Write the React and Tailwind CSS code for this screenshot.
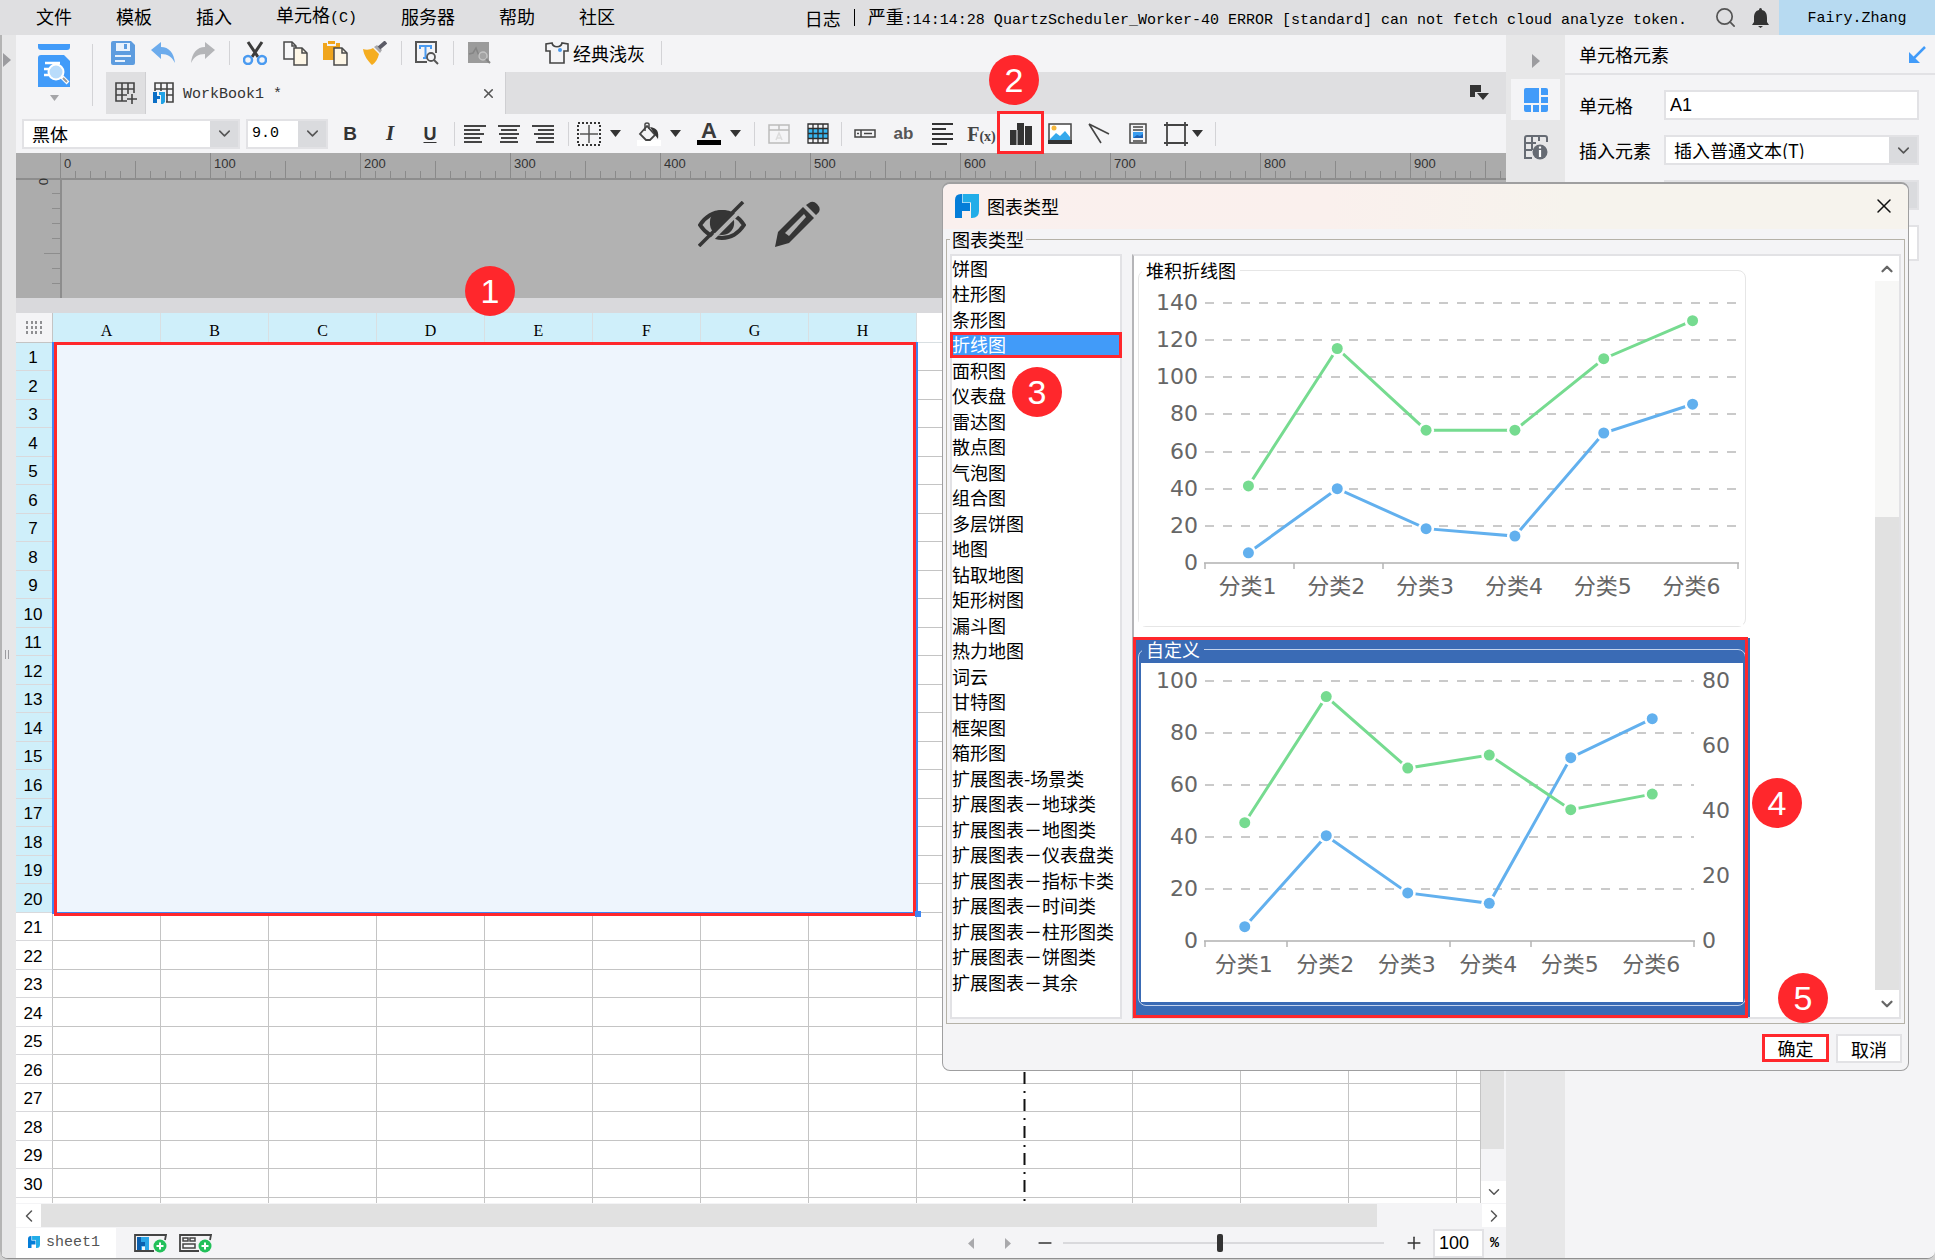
import React from "react";
import { Search, X, ChevronDown, ChevronUp, ChevronLeft, ChevronRight, Plus, Minus } from "lucide-react";

const MENUS = [
  { label: "文件" },
  { label: "模板" },
  { label: "插入" },
  { label: "单元格", key: "(C)" },
  { label: "服务器" },
  { label: "帮助" },
  { label: "社区" },
];

const CHART_TYPES = [
  "饼图", "柱形图", "条形图", "折线图", "面积图", "仪表盘", "雷达图", "散点图", "气泡图", "组合图",
  "多层饼图", "地图", "钻取地图", "矩形树图", "漏斗图", "热力地图", "词云", "甘特图", "框架图", "箱形图",
  "扩展图表-场景类", "扩展图表－地球类", "扩展图表－地图类", "扩展图表－仪表盘类", "扩展图表－指标卡类",
  "扩展图表－时间类", "扩展图表－柱形图类", "扩展图表－饼图类", "扩展图表－其余",
];

const COLUMNS = ["A", "B", "C", "D", "E", "F", "G", "H", "", "", "", "", "", ""];
const ROWS = Array.from({ length: 31 }, (_, i) => i + 1);
const CATEGORIES = ["分类1", "分类2", "分类3", "分类4", "分类5", "分类6"];
const BLUE = "#62b0ee";
const GREEN = "#76db90";

/* ---------- shared pieces ---------- */

function Badge({ n, className }) {
  return (
    <span
      className={
        "absolute z-30 flex size-[50px] items-center justify-center rounded-full bg-[#ff272c] font-['Liberation_Sans',sans-serif] text-[34px] leading-none font-normal text-white " +
        className
      }
    >
      {n}
    </span>
  );
}

function Slot({ label, className = "w-10", children }) {
  return (
    <button type="button" aria-label={label} className={"flex h-full shrink-0 items-center justify-center " + className}>
      {children}
    </button>
  );
}

function Sep({ className = "w-3" }) {
  return (
    <span className={"flex h-6 shrink-0 justify-center " + className}>
      <span className="h-full w-px bg-[#d3d3d6]" />
    </span>
  );
}

function Caret() {
  return (
    <svg width="11" height="7" viewBox="0 0 11 7">
      <path d="M0 0h11L5.500 7z" fill="#333" />
    </svg>
  );
}

function Logo({ size }) {
  return (
    <svg width={size} height={size} viewBox="0 0 24 24" className="shrink-0">
      <path d="M0 6Q0 0 6 0h1v9h8v8H7v7H0z" fill="#047dd8" />
      <path d="M8 0h16v17q0 7-7 7h-1V8H8z" fill="#22ade8" />
      <path d="M7.500 0v8.500H16" fill="none" stroke="#9ed7f4" strokeWidth="1" />
    </svg>
  );
}

function Dropdown({ id, label, value, className = "", textClass }) {
  return (
    <span className={"relative flex h-[30px] border-2 border-[#e2e2e5] bg-white " + className}>
      <select
        id={id}
        aria-label={label}
        className={"h-full w-full appearance-none bg-transparent pl-2 text-black outline-none " + textClass}
        defaultValue={value}
      >
        <option>{value}</option>
      </select>
      <span className="pointer-events-none absolute inset-y-0 right-0 flex w-7 items-center justify-center bg-[#dadbde]">
        <ChevronDown size={19} color="#555" strokeWidth={2} />
      </span>
    </span>
  );
}

/* ---------- top toolbar icons ---------- */

const SaveIcon = () => (
  <svg width="24" height="24" viewBox="0 0 24 24">
    <path d="M2 0h18l4 4v18a2 2 0 0 1-2 2H2a2 2 0 0 1-2-2V2a2 2 0 0 1 2-2z" fill="#5d9cdf" />
    <path d="M5 2h14v8H5z" fill="#e9f2fc" />
    <path d="M13 3h3v5h-3z" fill="#5d9cdf" />
    <path d="M4 15h16M4 20h10" stroke="#e9f2fc" strokeWidth="2" />
  </svg>
);
const UndoIcon = () => (
  <svg width="24" height="24" viewBox="0 0 24 24">
    <path d="M0 9 10 1v5c8 0 13 6 14 16-3-6-7-9-14-9v5z" fill="#6cabec" />
  </svg>
);
const RedoIcon = () => (
  <svg width="24" height="24" viewBox="0 0 24 24">
    <path d="M24 9 14 1v5C6 6 1 12 0 22c3-6 7-9 14-9v5z" fill="#b4b5b8" />
  </svg>
);
const CutIcon = () => (
  <svg width="24" height="24" viewBox="0 0 24 24" fill="none">
    <path d="m5 1 10 15M19 1 9 16" stroke="#3c3c3c" strokeWidth="3" />
    <circle cx="5" cy="19" r="4" stroke="#4a9af0" strokeWidth="2.500" />
    <circle cx="19" cy="19" r="4" stroke="#4a9af0" strokeWidth="2.500" />
  </svg>
);
const CopyIcon = () => (
  <svg width="25" height="25" viewBox="0 0 25 25" stroke="#4a4a4a" strokeWidth="1.500">
    <path d="M1 1h8l4 4v13H1z" fill="#f7f7f8" />
    <path d="M9 1v4h4" fill="none" />
    <path d="M11 7h8l5 5v12H11z" fill="#fdf6e6" />
    <path d="M19 7v5h5" fill="none" />
  </svg>
);
const PasteIcon = () => (
  <svg width="25" height="25" viewBox="0 0 25 25">
    <path d="M0 2h4v3h9V2h4v17H0z" fill="#f0a51c" />
    <path d="M5 0h7v3H5z" fill="#f0a51c" />
    <path d="M11 7h8l5 5v12H11z" fill="#fdf6e6" stroke="#4a4a4a" strokeWidth="1.500" />
    <path d="M19 7v5h5" fill="none" stroke="#4a4a4a" strokeWidth="1.500" />
  </svg>
);
const BrushIcon = () => (
  <svg width="24" height="24" viewBox="0 0 24 24">
    <path d="M0 8c3 1 7 1 10-1l6 6c-1 5-4 9-7 11C5 20 1 15 0 8z" fill="#f5ad20" />
    <path d="m11 6 6 6 2-3-5-5z" fill="#a8a8ab" />
    <path d="m16 7 7-6" stroke="#5b5b66" strokeWidth="4" />
  </svg>
);
const FindIcon = () => (
  <svg width="24" height="24" viewBox="0 0 24 24" fill="none">
    <path d="M12 21H1V1h20v11" stroke="#555" strokeWidth="2" />
    <path d="M5 8V5h11v3M10.500 5v12M8 17h5" stroke="#4a9af0" strokeWidth="2" />
    <circle cx="16" cy="16" r="4" fill="#f4f4f6" stroke="#555" strokeWidth="1.800" />
    <path d="m19 19 4 4" stroke="#555" strokeWidth="2" />
  </svg>
);
const GrayFindIcon = () => (
  <svg width="24" height="24" viewBox="0 0 24 24" fill="none">
    <path d="M1 1h21v21H1z" fill="#9b9b9b" />
    <path d="m2 13 4-1 3-5 3 8 3-4" stroke="#858585" strokeWidth="1.500" />
    <circle cx="16" cy="15" r="4" fill="#a4a4a4" stroke="#c4c4c4" strokeWidth="1.500" />
    <path d="m19 18 4 4" stroke="#858585" strokeWidth="2" />
  </svg>
);
const ShirtIcon = () => (
  <svg width="24" height="24" viewBox="0 0 24 24" fill="none">
    <path d="M7 2 1 3v7h4v12h14V10h4V3l-6-1c-1 5-9 5-10 0z" stroke="#444" strokeWidth="1.600" />
    <circle cx="15" cy="9" r="2" fill="#4a9af0" />
  </svg>
);
const PreviewIcon = () => (
  <svg width="32" height="43" viewBox="0 0 32 43">
    <path d="M0 0h32v3q0 3-3 3H3Q0 6 0 3z" fill="#419bf9" />
    <path d="M3 11h23l6 6v26H0V14q0-3 3-3z" fill="#419bf9" />
    <path d="M7 19h15M6 25h6M6 31h5" stroke="#fff" strokeWidth="2.500" />
    <circle cx="18" cy="28" r="7.500" fill="#b9dcfb" stroke="#fff" strokeWidth="2" />
    <path d="m24 33 6 6" stroke="#fff" strokeWidth="4" />
    <path d="m25 34 4 4" stroke="#9a9a9a" strokeWidth="2" />
  </svg>
);

/* ---------- format toolbar icons ---------- */

function AlignIcon({ kind }) {
  const starts = { left: [0, 0, 0, 0, 0], center: [0, 3, 1, 3, 2], right: [0, 6, 2, 6, 4] }[kind];
  const widths = [22, 16, 20, 16, 18];
  return (
    <svg width="22" height="18" viewBox="0 0 22 18">
      {widths.map((w, i) => (
        <rect key={i} x={starts[i]} y={i * 4} width={w} height="2" fill="#444" />
      ))}
    </svg>
  );
}
const BorderIcon = () => (
  <svg width="24" height="24" viewBox="0 0 24 24" fill="none">
    <path d="M1 1h22v22H1z" stroke="#333" strokeWidth="2" strokeDasharray="2 2" />
    <path d="M12 3v18M3 12h18" stroke="#555" strokeWidth="1.500" />
  </svg>
);
const BucketIcon = () => (
  <svg width="24" height="24" viewBox="0 0 24 24" fill="none">
    <rect x="0" y="18" width="24" height="6" fill="#fff" />
    <path d="m10 4-7 8 6 6h4l5-5z" stroke="#444" strokeWidth="1.800" />
    <path d="M8 9V2q0-1 2-1t2 1v5" stroke="#444" strokeWidth="1.500" />
    <path d="M13 5c7 1 9 4 8 12l-3-4z" fill="#333" />
  </svg>
);
const FontColorIcon = () => (
  <span className="flex flex-col items-center">
    <span className="font-['Liberation_Sans',sans-serif] text-[22px] leading-[18px] font-bold text-[#3a3a3a]">A</span>
    <span className="h-[5px] w-6 bg-black" />
  </span>
);
const GrayTableIcon = () => (
  <svg width="22" height="20" viewBox="0 0 22 20" fill="none" stroke="#bcbcbc" strokeWidth="1.500">
    <path d="M1 1h20v18H1zM1 6h20M11 1v5" />
    <path d="M8 16l3-7 3 7M9 14h4" stroke="#dcdcdc" />
  </svg>
);
const TableIcon = () => (
  <svg width="22" height="21" viewBox="0 0 22 21" fill="none">
    <path d="M1 6h20v9H1z" fill="#36b7f2" />
    <path d="M1 1h20v19H1zM1 5.500h20M1 10.500h20M1 15.500h20M6 1v19M11 1v19M16 1v19" stroke="#2e2e2e" strokeWidth="1.300" />
  </svg>
);
const FieldIcon = () => (
  <svg width="22" height="9" viewBox="0 0 22 9" fill="none" stroke="#444" strokeWidth="1.500">
    <path d="M1 1h20v7H1zM7 1v7M3 4.500h2M10 4.500h8" />
  </svg>
);
const ParagraphIcon = () => (
  <svg width="22" height="22" viewBox="0 0 22 22" stroke="#333" strokeWidth="2">
    <path d="M0 1h21M0 6h14M0 11h21M0 16h21M0 21h15" />
  </svg>
);
const BarsIcon = () => (
  <svg width="22" height="22" viewBox="0 0 22 22" fill="#333">
    <path d="M0 7h7v15H0zM7 0h7v22H7zM15 3h7v19h-7z" />
    <path d="M7 7v15M14.500 3v19" stroke="#f4f4f6" strokeWidth="1" />
  </svg>
);
const PictureIcon = () => (
  <svg width="24" height="21" viewBox="0 0 24 21" fill="none">
    <path d="M1 1h22v18H1z" fill="#fff" stroke="#444" strokeWidth="1.500" />
    <circle cx="6" cy="5" r="2.500" fill="#f5b73c" />
    <path d="m2 16 6-6 4 3 5-5 5 6v3H2z" fill="#36a9ec" />
    <path d="M0 17h24v4H0z" fill="#333" />
  </svg>
);
const SlashIcon = () => (
  <svg width="22" height="21" viewBox="0 0 22 21" stroke="#444" strokeWidth="1.600">
    <path d="m1 1 20 10M1 1l12 19" />
  </svg>
);
const DocIcon = () => (
  <svg width="18" height="21" viewBox="0 0 18 21" fill="none">
    <path d="M1 1h16v19H1z" stroke="#444" strokeWidth="1.500" />
    <path d="M4 4h10M4 7h10M4 18h10" stroke="#444" strokeWidth="1.500" />
    <path d="M4 9h10v6H4z" fill="#3a9df0" />
    <path d="m4 15 4-3 3 1 3-2v4z" fill="#1c61b5" />
  </svg>
);
const FrameIcon = () => (
  <svg width="24" height="24" viewBox="0 0 24 24" stroke="#444" strokeWidth="1.800">
    <path d="M0 3h24M0 21h24M3 0v24M21 0v24" />
  </svg>
);

/* ---------- line chart preview ---------- */

function LineChart({ width, height, left, right, top, bottom, max, ticks, series, secondary, label }) {
  const step = (right - left) / CATEGORIES.length;
  const px = (i) => left - 1 + step * (i + 0.5);
  const py = (v) => bottom - (v / max) * (bottom - top);
  const marks = Array.from({ length: max / 20 + 1 }, (_, i) => i * 20);
  return (
    <svg
      width={width}
      height={height}
      viewBox={`0 0 ${width} ${height}`}
      role="img"
      aria-label={label}
      className="block bg-white font-['DejaVu_Sans','Noto_Sans_CJK_SC',sans-serif] text-[22px]"
    >
      {marks.map((m) => (
        <g key={m}>
          <text x={left - 7} y={py(m) + 7} textAnchor="end" fill="#666">
            {m}
          </text>
          {m > 0 && (
            <path d={`M${left} ${Math.round(py(m))}H${right}`} stroke="#cacaca" strokeWidth="2" strokeDasharray="9 9" />
          )}
        </g>
      ))}
      {secondary &&
        secondary.map((m, i) => (
          <text key={m} x={right + 8} y={bottom + 7 - (i * (bottom - top)) / (secondary.length - 1)} fill="#666">
            {m}
          </text>
        ))}
      <path d={`M${left - 1} ${bottom}H${right + 1}`} stroke="#c4c4c4" strokeWidth="2" />
      {ticks.map((t) => (
        <path key={t} d={`M${Math.round(left + step * t)} ${bottom}v6`} stroke="#b4b4b4" strokeWidth="1.500" />
      ))}
      {CATEGORIES.map((c, i) => (
        <text key={c} x={px(i) - 1} y={bottom + 31} textAnchor="middle" fill="#666">
          {c}
        </text>
      ))}
      {series.map((s) => (
        <g key={s.color}>
          <polyline points={s.values.map((v, i) => `${px(i)},${py(v)}`).join(" ")} fill="none" stroke={s.color} strokeWidth="3" />
          {s.values.map((v, i) => (
            <g key={i}>
              <circle cx={px(i)} cy={py(v)} r="8" fill="#fff" />
              <circle cx={px(i)} cy={py(v)} r="5.500" fill={s.color} />
            </g>
          ))}
        </g>
      ))}
    </svg>
  );
}

/* ---------- page regions ---------- */

function MenuBar() {
  return (
    <header className="flex h-[35px] shrink-0 items-stretch bg-[#dfdfe1]">
      <nav className="flex items-center gap-[44px] pb-1 pl-9">
        {MENUS.map((m) => (
          <button key={m.label} type="button" className="flex items-baseline">
            {m.label}
            {m.key && <span className="font-['Liberation_Mono',monospace] text-[15px]">{m.key}</span>}
          </button>
        ))}
      </nav>
      <div className="ml-auto flex items-center">
        <span>日志</span>
        <span className="mx-[13px] h-[17px] w-px bg-black" />
        <span className="flex items-baseline">
          严重
          <span className="font-['Liberation_Mono',monospace] text-[15px]">
            :14:14:28 QuartzScheduler_Worker-40 ERROR [standard] can not fetch cloud analyze token.
          </span>
        </span>
        <button type="button" aria-label="搜索" className="ml-[27px]">
          <Search size={23} color="#555" strokeWidth={1.8} />
        </button>
        <button type="button" aria-label="通知" className="mr-[10px] ml-[15px]">
          <svg width="17" height="20" viewBox="0 0 17 20" fill="#333">
            <path d="M8.500 0q1.500 0 1.500 2c4 1 5 4 5 8v4l2 3H0l2-3v-4c0-4 1-7 5-8q0-2 1.500-2zM6 18h5l-2.500 2z" />
          </svg>
        </button>
        <button
          type="button"
          className="h-full w-[156px] bg-[#b7daf1] pt-[2px] font-['Liberation_Mono',monospace] text-[15px]"
        >
          Fairy.Zhang
        </button>
      </div>
    </header>
  );
}

function ToolArea() {
  return (
    <div className="flex h-[79px] shrink-0">
      <div className="flex w-[87px] shrink-0 pt-[9px]">
        <button type="button" aria-label="预览" className="ml-[22px] flex w-8 flex-col items-center">
          <PreviewIcon />
          <svg width="9" height="6" viewBox="0 0 9 6" className="mt-2">
            <path d="M0 0h9L4.500 6z" fill="#a5a5a8" />
          </svg>
        </button>
        <span className="ml-[22px] h-[62px] w-px bg-[#d3d3d6]" />
      </div>
      <div className="flex min-w-0 flex-1 flex-col">
        <div className="flex h-[37px] items-center pb-px">
          <Slot label="保存"><SaveIcon /></Slot>
          <Slot label="撤销"><UndoIcon /></Slot>
          <Slot label="重做"><RedoIcon /></Slot>
          <Sep />
          <Slot label="剪切"><CutIcon /></Slot>
          <Slot label="复制"><CopyIcon /></Slot>
          <Slot label="粘贴"><PasteIcon /></Slot>
          <Slot label="格式刷"><BrushIcon /></Slot>
          <Sep />
          <Slot label="查找"><FindIcon /></Slot>
          <Sep />
          <Slot label="检测"><GrayFindIcon /></Slot>
          <button type="button" className="ml-[46px] flex items-center gap-1">
            <ShirtIcon />
            经典浅灰
          </button>
          <Sep className="ml-2 w-4" />
        </div>
        <div className="ml-[3px] flex h-[42px] bg-[#dfdfe1]">
          <button type="button" aria-label="新建" className="flex w-[40px] items-center justify-center border-r border-[#cfcfd2]">
            <svg width="22" height="22" viewBox="0 0 22 22" fill="none" stroke="#444" strokeWidth="1.600">
              <path d="M12 19H1V1h18v10M1 7h18M1 13h11M7 1v18M13 1v11" />
              <path d="M17 12v10M12 17h10" />
            </svg>
          </button>
          <div className="flex w-[360px] items-center border-r border-[#cfcfd2] bg-[#f4f4f6] pr-[9px] pl-[7px]">
            <svg width="22" height="22" viewBox="0 0 22 22" fill="none">
              <path d="M2 9V1h18v19h-7M2 7h18M13 13h7M8 1v8M14 1v19" stroke="#444" strokeWidth="1.600" />
              <path d="M0 10h4v4h3v3H4v4H0z" fill="#0b6fc6" />
              <path d="M6 10h6v10l-2 2H8v-9H6z" fill="#21a3e6" />
            </svg>
            <span className="ml-2 pt-[2px] font-['Liberation_Mono',monospace] text-[15px] text-[#333]">WorkBook1 *</span>
            <button type="button" aria-label="关闭" className="ml-auto">
              <X size={15} color="#555" strokeWidth={2.500} />
            </button>
          </div>
          <button type="button" aria-label="模板列表" className="mr-[17px] ml-auto flex items-center">
            <svg width="19" height="16" viewBox="0 0 19 16" fill="#333">
              <path d="M0 0h11v7H5v5H0zM7 8h12l-6 7z" />
            </svg>
          </button>
        </div>
      </div>
    </div>
  );
}

function FormatBar() {
  const glyph = "font-['Liberation_Sans',sans-serif] leading-none text-[#333]";
  return (
    <div className="flex h-[39px] shrink-0 items-center pl-[6px]">
      <Dropdown label="字体" value="黑体" className="w-[218px]" textClass="text-lg leading-none" />
      <Dropdown
        label="字号"
        value="9.0"
        className="mr-[2px] ml-[6px] w-[82px]"
        textClass="font-['Liberation_Mono',monospace] text-[15px] !pl-1"
      />
      <Slot label="加粗" className="w-10"><b className={glyph + " text-[19px]"}>B</b></Slot>
      <Slot label="斜体" className="w-10">
        <i className="font-['Liberation_Serif',serif] text-[21px] leading-none font-bold text-[#333]">I</i>
      </Slot>
      <Slot label="下划线" className="w-10"><u className={glyph + " text-[18px] font-bold underline-offset-2"}>U</u></Slot>
      <Sep className="w-2" />
      <Slot label="左对齐" className="w-[34px]"><AlignIcon kind="left" /></Slot>
      <Slot label="居中" className="w-[34px]"><AlignIcon kind="center" /></Slot>
      <Slot label="右对齐" className="w-[34px]"><AlignIcon kind="right" /></Slot>
      <Sep className="w-4" />
      <Slot label="边框" className="w-[26px]"><BorderIcon /></Slot>
      <Slot label="边框选项" className="w-[26px]"><Caret /></Slot>
      <Slot label="填充" className="ml-2 w-[26px]"><BucketIcon /></Slot>
      <Slot label="填充选项" className="w-[26px]"><Caret /></Slot>
      <Slot label="文字颜色" className="ml-2 w-[26px]"><FontColorIcon /></Slot>
      <Slot label="颜色选项" className="w-[26px]"><Caret /></Slot>
      <Sep />
      <Slot label="合并单元格" className="w-[38px]"><GrayTableIcon /></Slot>
      <Slot label="数据列" className="w-[39px]"><TableIcon /></Slot>
      <Sep className="w-2" />
      <Slot label="控件" className="w-[39px]"><FieldIcon /></Slot>
      <Slot label="文本" className="w-[39px]"><b className={glyph + " text-[17px] text-[#555]"}>ab</b></Slot>
      <Slot label="富文本" className="w-[39px]"><ParagraphIcon /></Slot>
      <Slot label="公式" className="w-[39px]">
        <span className="font-['Liberation_Serif',serif] leading-none font-bold text-[#444]">
          <span className="text-[20px]">F</span>
          <span className="text-[14px]">(x)</span>
        </span>
      </Slot>
      <span className="relative flex h-full w-[39px]">
        <Slot label="图表" className="w-full"><BarsIcon /></Slot>
        <span className="pointer-events-none absolute -inset-x-1 -top-[3px] -bottom-px z-10 border-[3px] border-[#ff272c]" />
        <Badge n="2" className="-top-[59px] -left-3" />
      </span>
      <Slot label="图片" className="w-[39px]"><PictureIcon /></Slot>
      <Slot label="斜线" className="w-[39px]"><SlashIcon /></Slot>
      <Slot label="子报表" className="w-[39px]"><DocIcon /></Slot>
      <Slot label="悬浮元素" className="ml-[6px] w-[26px]"><FrameIcon /></Slot>
      <Slot label="悬浮选项" className="w-4"><Caret /></Slot>
      <Sep className="w-5" />
    </div>
  );
}

function Ruler() {
  return (
    <div className="flex h-[27px] shrink-0 overflow-hidden border-b-2 border-[#8d8d8d] bg-[#ababab] pl-[44px]">
      {[0, 100, 200, 300, 400, 500, 600, 700, 800, 900].map((n) => (
        <div key={n} className="flex w-[150px] shrink-0 flex-col border-l border-[#8a8a8a]">
          <span className="h-[18px] pl-[3px] font-['Liberation_Sans',sans-serif] text-[13px] leading-[22px] text-[#333]">{n}</span>
          <span className="flex h-[7px] items-end">
            {Array.from({ length: 10 }, (_, i) => (
              <span
                key={i}
                className={
                  i === 0
                    ? "h-0 w-[14px] shrink-0"
                    : i === 5
                    ? "h-[17px] w-[15px] shrink-0 border-l border-[#8a8a8a]"
                    : "h-[7px] w-[15px] shrink-0 border-l border-[#8a8a8a]"
                }
              />
            ))}
          </span>
        </div>
      ))}
    </div>
  );
}

function PreviewPane() {
  return (
    <div className="flex h-[118px] shrink-0 bg-[#b2b2b2]">
      <div className="flex w-[46px] shrink-0 items-start border-r-2 border-[#8d8d8d] bg-[#acacac]">
        <span className="ml-[21px] w-3 rotate-90 font-['Liberation_Sans',sans-serif] text-[13px] leading-[8px] text-[#333]">0</span>
        <span className="mt-[13px] ml-auto flex flex-col items-end gap-[14px]">
          {[1, 2, 3, 4, 5, 6, 7].map((n) => (
            <span key={n} className={n === 5 ? "-ml-4 h-px w-4 bg-[#8d8d8d]" : "h-px w-2 bg-[#8d8d8d]"} />
          ))}
        </span>
      </div>
      <div className="ml-[636px] flex items-start gap-[28px] pt-[21px]">
        <button type="button" aria-label="隐藏">
          <svg width="48" height="46" viewBox="0 0 48 46" fill="none">
            <path d="M2 24C8 15 15 11 24 11s16 4 22 13c-6 9-13 13-22 13S8 33 2 24z" stroke="#353535" strokeWidth="4" />
            <path d="M24 9c-9 0-13 7-12 15 1 7 6 10 12 10s11-4 12-10c1-8-3-15-12-15z" fill="#353535" />
            <path d="M4 48 49 3" stroke="#b2b2b2" strokeWidth="4" />
            <path d="M1 45 45 1" stroke="#353535" strokeWidth="3.500" />
          </svg>
        </button>
        <button type="button" aria-label="编辑">
          <svg width="46" height="46" viewBox="0 0 46 46" fill="none">
            <path d="M4 31 29 6l11 11-25 25-14 4z" fill="#353535" />
            <path d="m11 32 19-19 2 3-17 19z" fill="#b2b2b2" />
            <path d="m32 4 3-2q4-3 8 1t2 8l-3 3z" fill="#353535" />
          </svg>
        </button>
      </div>
    </div>
  );
}

function Sheet() {
  const line = "border-r border-b border-[#c4c4c4]";
  return (
    <div className="relative flex min-h-0 flex-1">
      <div className="relative min-w-0 flex-1 overflow-hidden bg-white">
        <table className="w-full table-fixed border-separate border-spacing-0">
          <colgroup>
            <col className="w-[37px]" />
            {COLUMNS.slice(0, 13).map((c, i) => (
              <col key={i} className="w-[108px]" />
            ))}
            <col />
          </colgroup>
          <thead>
            <tr className="h-[30px] font-['Liberation_Serif',serif] text-base leading-none">
              <th className={"bg-[#f4f4f6] p-0 " + line}>
                <svg width="17" height="14" viewBox="0 0 17 14" className="mx-auto" fill="#8f8f92">
                  {[0, 5, 10].map((y) => [0, 5, 9, 14].map((x) => <rect key={x + "-" + y} x={x} y={y} width="2" height="3" />))}
                </svg>
              </th>
              {COLUMNS.map((c, i) => (
                <th
                  key={i}
                  scope="col"
                  className={
                    "border-r border-b border-[#d9dfe2] p-0 pt-[6px] font-medium " + (i < 8 ? "bg-[#cfeffa]" : "bg-white")
                  }
                >
                  {c}
                </th>
              ))}
            </tr>
          </thead>
          <tbody>
            {ROWS.map((r) => (
              <tr key={r} className="h-7 even:h-[29px]">
                <th
                  scope="row"
                  className={
                    "border-r border-b border-r-[#c4c4c4] border-b-[#d9d9dc] p-0 pt-[2px] pr-[2px] font-['Liberation_Sans',sans-serif] text-[17px] leading-none font-normal " +
                    (r <= 20 ? "bg-[#cfeffa]" : "bg-white")
                  }
                >
                  {r <= 30 ? r : null}
                </th>
                {COLUMNS.map((c, i) => (
                  <td
                    key={i}
                    className={
                      r <= 20 && i < 8
                        ? "bg-[#eef5fd] p-0"
                        : i === 8
                        ? "border-b border-[#c4c4c4] p-0"
                        : "p-0 " + line
                    }
                  />
                ))}
              </tr>
            ))}
          </tbody>
        </table>
        <svg width="3" height="860" className="absolute top-[30px] left-[1007px]">
          <path d="M1.500 0V860" stroke="#111" strokeWidth="2" strokeDasharray="12 7 2 6" />
        </svg>
        <div className="absolute top-[29px] left-[36px] h-[572px] w-[866px] border-2 border-[#3f86f2]" />
        <div className="absolute top-[29px] left-[38px] h-[574px] w-[862px] border-[3px] border-[#ff272c]" />
        <div className="absolute top-[598px] left-[899px] size-[6px] bg-[#3f86f2]" />
      </div>
      <div className="flex w-[25px] shrink-0 flex-col bg-[#f4f4f6]">
        <div className="mr-[2px] mt-[22px] h-[814px] bg-[#e1e1e1]" />
        <button type="button" aria-label="向下滚动" className="mt-auto flex h-[22px] items-center justify-center bg-white">
          <ChevronDown size={18} color="#555" />
        </button>
      </div>
      <Badge n="1" className="-top-[47px] left-[449px]" />
    </div>
  );
}

function HorizontalScroll() {
  return (
    <div className="flex h-[25px] shrink-0 items-stretch py-px">
      <button type="button" aria-label="向左滚动" className="flex w-[25px] items-center justify-center bg-white">
        <ChevronLeft size={20} color="#555" strokeWidth={1.800} />
      </button>
      <div className="flex flex-1">
        <div className="mr-[105px] flex-1 bg-[#e1e1e1]" />
      </div>
      <button type="button" aria-label="向右滚动" className="flex w-6 items-center justify-center bg-white">
        <ChevronRight size={20} color="#555" strokeWidth={1.800} />
      </button>
    </div>
  );
}

function AddSheetIcon({ report }) {
  return (
    <svg width="34" height="19" viewBox="0 0 34 19" fill="none">
      <path d="M20 17H1V1h31l-1 5" stroke="#444" strokeWidth="1.800" />
      {report ? (
        <>
          <path d="M3 3h12v13H3z" fill="#2ba5e6" />
          <path d="M3 3h4v5h4v4H7v4H3z" fill="#0b5fae" />
          <path d="M8 12.500h3V16H8z" fill="#f4f4f6" />
        </>
      ) : (
        <path d="M4 4h5v3H4zM11 4h5v3h-5zM4 10h12v4H4z" stroke="#444" strokeWidth="1.500" />
      )}
      <circle cx="26" cy="12" r="6.500" fill="#22c05a" />
      <path d="M26 8.500v7M22.500 12h7" stroke="#fff" strokeWidth="2" />
    </svg>
  );
}

function StatusBar() {
  return (
    <footer className="flex h-[30px] shrink-0 items-center">
      <button type="button" className="flex h-full w-[100px] items-center gap-[6px] bg-white pb-[2px] pl-3 font-['Liberation_Mono',monospace] text-[15px] text-[#555]">
        <Logo size={12} />
        sheet1
      </button>
      <button type="button" aria-label="新增报表" className="ml-[18px]"><AddSheetIcon report /></button>
      <button type="button" aria-label="新增聚合报表" className="ml-[11px]"><AddSheetIcon /></button>
      <div className="ml-auto flex h-full items-center">
        <button type="button" aria-label="上一页">
          <svg width="6" height="11" viewBox="0 0 6 11"><path d="M6 0v11L0 5.500z" fill="#a9a9ac" /></svg>
        </button>
        <button type="button" aria-label="下一页" className="ml-[31px]">
          <svg width="6" height="11" viewBox="0 0 6 11"><path d="M0 0v11l6-5.500z" fill="#a9a9ac" /></svg>
        </button>
        <button type="button" aria-label="缩小" className="ml-[24px]"><Minus size={20} color="#333" strokeWidth={2} /></button>
        <input
          type="range"
          aria-label="缩放"
          min="0"
          max="100"
          defaultValue="49"
          className="mx-2 h-5 w-[321px] appearance-none bg-[linear-gradient(#d9d9dc,#d9d9dc)] bg-[length:100%_2px] bg-center bg-no-repeat [&::-webkit-slider-thumb]:h-[18px] [&::-webkit-slider-thumb]:w-[6px] [&::-webkit-slider-thumb]:appearance-none [&::-webkit-slider-thumb]:rounded-[2px] [&::-webkit-slider-thumb]:bg-[#333]"
        />
        <button type="button" aria-label="放大" className="ml-3"><Plus size={20} color="#333" strokeWidth={1.800} /></button>
        <input
          aria-label="缩放比例"
          defaultValue="100"
          className="ml-[9px] h-[29px] w-[51px] border-2 border-[#e2e2e5] bg-white pl-1 font-['Liberation_Sans',sans-serif] text-lg leading-none outline-none"
        />
        <span className="mr-[7px] ml-[6px] font-['Liberation_Mono',monospace] text-[15px] font-bold">%</span>
      </div>
    </footer>
  );
}

function SideTabs() {
  return (
    <div className="flex w-[59px] shrink-0 flex-col items-center bg-[#e7e7e8]">
      <button type="button" aria-label="收起" className="mt-[19px]">
        <svg width="8" height="14" viewBox="0 0 8 14"><path d="M0 0v14l8-7z" fill="#9c9c9f" /></svg>
      </button>
      <button type="button" aria-label="单元格元素" className="mt-[11px] flex h-[41px] w-[49px] items-center justify-center bg-[#f4f4f6]">
        <svg width="24" height="24" viewBox="0 0 24 24" fill="#419bf9">
          <path d="M2 0h13v15H0V2q0-2 2-2zM17 0h5q2 0 2 2v5h-7zM17 9h7v6h-7zM0 17h7v7H2q-2 0-2-2zM9 17h6v7H9zM17 17h7v5q0 2-2 2h-5z" />
        </svg>
      </button>
      <button type="button" aria-label="单元格属性" className="mt-[15px]">
        <svg width="24" height="25" viewBox="0 0 24 25" fill="none">
          <path d="M8 23H1V3q0-2 2-2h18q2 0 2 2v4M1 8h11M1 15h7M8 1v14M15 1v5" stroke="#666b73" strokeWidth="2" />
          <circle cx="16" cy="17" r="7.500" fill="#666b73" />
          <path d="M16 15v7M16 11.500v2" stroke="#fff" strokeWidth="2.200" />
        </svg>
      </button>
    </div>
  );
}

function PropertyPanel() {
  return (
    <aside className="flex w-[370px] shrink-0 flex-col bg-[#f4f4f6]">
      <div className="flex h-[40px] items-center border-b-2 border-[#e2e2e5] pr-[9px] pl-[14px]">
        <h2 className="text-lg leading-none font-normal">单元格元素</h2>
        <button type="button" aria-label="弹出" className="ml-auto">
          <svg width="17" height="17" viewBox="0 0 17 17" fill="none" stroke="#419bf9" strokeWidth="2.500">
            <path d="M16 1 4 13" />
            <path d="M0 6v11h11z" fill="#419bf9" stroke="none" />
          </svg>
        </button>
      </div>
      <div className="grid grid-cols-[85px_1fr] items-center gap-y-[15px] pt-[15px] pr-4 pl-[14px]">
        <label htmlFor="cell">单元格</label>
        <input
          id="cell"
          defaultValue="A1"
          className="h-[30px] w-full border-2 border-[#e2e2e5] bg-white pl-1 font-['Liberation_Sans',sans-serif] text-lg leading-none outline-none"
        />
        <label htmlFor="element">插入元素</label>
        <Dropdown id="element" label="插入元素" value="插入普通文本(T)" textClass="text-lg leading-none" />
        <span className="col-start-2">
          <Dropdown label="格式" value="常规" textClass="text-lg leading-none" />
        </span>
        <input aria-label="内容" className="col-start-2 h-[36px] w-full border-2 border-[#e2e2e5] bg-white outline-none" />
      </div>
    </aside>
  );
}

function ChartDialog() {
  return (
    <section
      role="dialog"
      aria-label="图表类型"
      className="absolute top-[182px] right-[26px] z-20 flex w-[967px] flex-col rounded-lg border border-t-2 border-[#9f9fa0] bg-[#f4f4f6]"
    >
      <div className="flex h-[45px] items-center rounded-t-lg bg-[linear-gradient(90deg,#faf0ee,#faf0ed_40%,#f6f3ed_65%)] pr-3 pb-[2px] pl-3">
        <Logo size={24} />
        <h1 className="ml-2 text-lg leading-none font-normal">图表类型</h1>
        <button type="button" aria-label="关闭" className="ml-auto">
          <X size={24} color="#111" strokeWidth={1.500} />
        </button>
      </div>
      <fieldset className="mx-[3px] mt-px min-w-0 border border-[#b5b2a8] pr-[3px] pb-1 pl-[3px]">
        <legend className="px-[2px] text-lg leading-[18px]">图表类型</legend>
        <div className="flex pt-[6px]">
          <div className="relative w-[172px] shrink-0 border-2 border-[#e2e2e5] bg-white">
            <ul role="listbox" aria-label="图表类型列表">
              {CHART_TYPES.map((t) => (
                <li
                  key={t}
                  role="option"
                  aria-selected={t === "折线图"}
                  className={
                    "h-[25px] leading-6 whitespace-nowrap even:h-[26px] " +
                    (t === "折线图" ? "relative bg-[#419bf9] text-white" : "")
                  }
                >
                  {t}
                  {t === "折线图" && <span className="absolute -inset-x-[2px] inset-y-0 border-[3px] border-[#ff272c]" />}
                </li>
              ))}
            </ul>
            <Badge n="3" className="top-[111px] left-[60px]" />
          </div>
          <div className="ml-[10px] flex min-w-0 flex-1 border-2 border-[#e2e2e5] border-l-[#b5b5b8] bg-white">
            <div className="flex-1 pt-[5px]">
              <fieldset className="ml-1 w-[608px] rounded-lg border border-[#e6e6e6]">
                <legend className="ml-[3px] px-1 text-lg leading-[18px]">堆积折线图</legend>
                <LineChart
                  label="堆积折线图"
                  width={604}
                  height={347}
                  left={66}
                  right={599}
                  top={24}
                  bottom={284}
                  max={140}
                  ticks={[0, 1, 2, 6]}
                  series={[
                    { color: BLUE, values: [5.5, 40, 18.5, 14.5, 70, 85.5] },
                    { color: GREEN, values: [41.5, 115.5, 71.5, 71.5, 110, 130.5] },
                  ]}
                />
              </fieldset>
              <div className="relative mt-[11px] w-[616px] bg-[#3a6bb5] pt-[2px] pb-[11px]">
                <fieldset className="ml-1 w-[608px] rounded-lg border border-[#c3d3ec] px-[2px] pb-[3px]">
                  <legend className="ml-px px-1 text-lg leading-[18px] text-white">自定义</legend>
                  <div className="pt-[5px]">
                    <LineChart
                      label="自定义"
                      width={602}
                      height={339}
                      left={64}
                      right={553}
                      top={18}
                      bottom={278}
                      max={100}
                      ticks={[0, 1, 3, 4, 6]}
                      secondary={[0, 20, 40, 60, 80]}
                      series={[
                        { color: BLUE, values: [5.5, 40.5, 18.5, 14.5, 70.5, 85.5] },
                        { color: GREEN, values: [45.5, 94, 66.5, 71.5, 50.5, 56.5] },
                      ]}
                    />
                  </div>
                </fieldset>
                <span className="pointer-events-none absolute -inset-y-px right-[2px] -left-px border-[3px] border-[#ff272c]" />
                <Badge n="4" className="top-[140px] left-[618px]" />
              </div>
            </div>
            <div className="flex w-6 flex-col bg-[#e1e1e1]">
              <button type="button" aria-label="向上滚动" className="flex h-[25px] items-center justify-center bg-white">
                <ChevronUp size={18} color="#666" strokeWidth={3} />
              </button>
              <div className="h-[236px] bg-[#f7f7f6]" />
              <button type="button" aria-label="向下滚动" className="mt-auto flex h-[27px] items-center justify-center bg-white">
                <ChevronDown size={18} color="#666" strokeWidth={3} />
              </button>
            </div>
          </div>
        </div>
      </fieldset>
      <div className="relative flex justify-end gap-[7px] pt-[10px] pr-[6px] pb-[7px]">
        <button type="button" className="h-[28px] w-[67px] border-[3px] border-[#ff272c] bg-white leading-none">确定</button>
        <button type="button" className="h-[29px] w-[66px] border-2 border-[#e2e2e5] bg-white leading-none">取消</button>
        <Badge n="5" className="-top-[51px] right-[80px]" />
      </div>
    </section>
  );
}

export default function App() {
  return (
    <div className="h-screen overflow-hidden bg-[#cfcfcf] font-['Noto_Sans_CJK_SC',sans-serif] text-lg leading-none text-black">
      <div className="relative flex h-[calc(100vh-1px)] flex-col overflow-hidden rounded-b-lg border-b border-[#8f8f8f] bg-[#f4f4f6]">
        <MenuBar />
        <div className="flex min-h-0 flex-1">
          <div className="flex w-4 shrink-0 flex-col border-l-2 border-[#b4b4b4] bg-[#e7e7e8]">
            <button type="button" aria-label="展开" className="mt-[18px] ml-px">
              <svg width="8" height="14" viewBox="0 0 8 14"><path d="M0 0v14l8-7z" fill="#9c9c9f" /></svg>
            </button>
            <span className="mt-[583px] ml-[3px] h-[9px] w-1 border-x border-[#9c9c9f]" />
          </div>
          <main className="flex min-w-0 flex-1 flex-col">
            <ToolArea />
            <FormatBar />
            <Ruler />
            <PreviewPane />
            <div className="h-[15px] shrink-0 bg-[#d9d9dc]" />
            <Sheet />
            <HorizontalScroll />
            <StatusBar />
          </main>
          <SideTabs />
          <PropertyPanel />
        </div>
        <ChartDialog />
      </div>
    </div>
  );
}
